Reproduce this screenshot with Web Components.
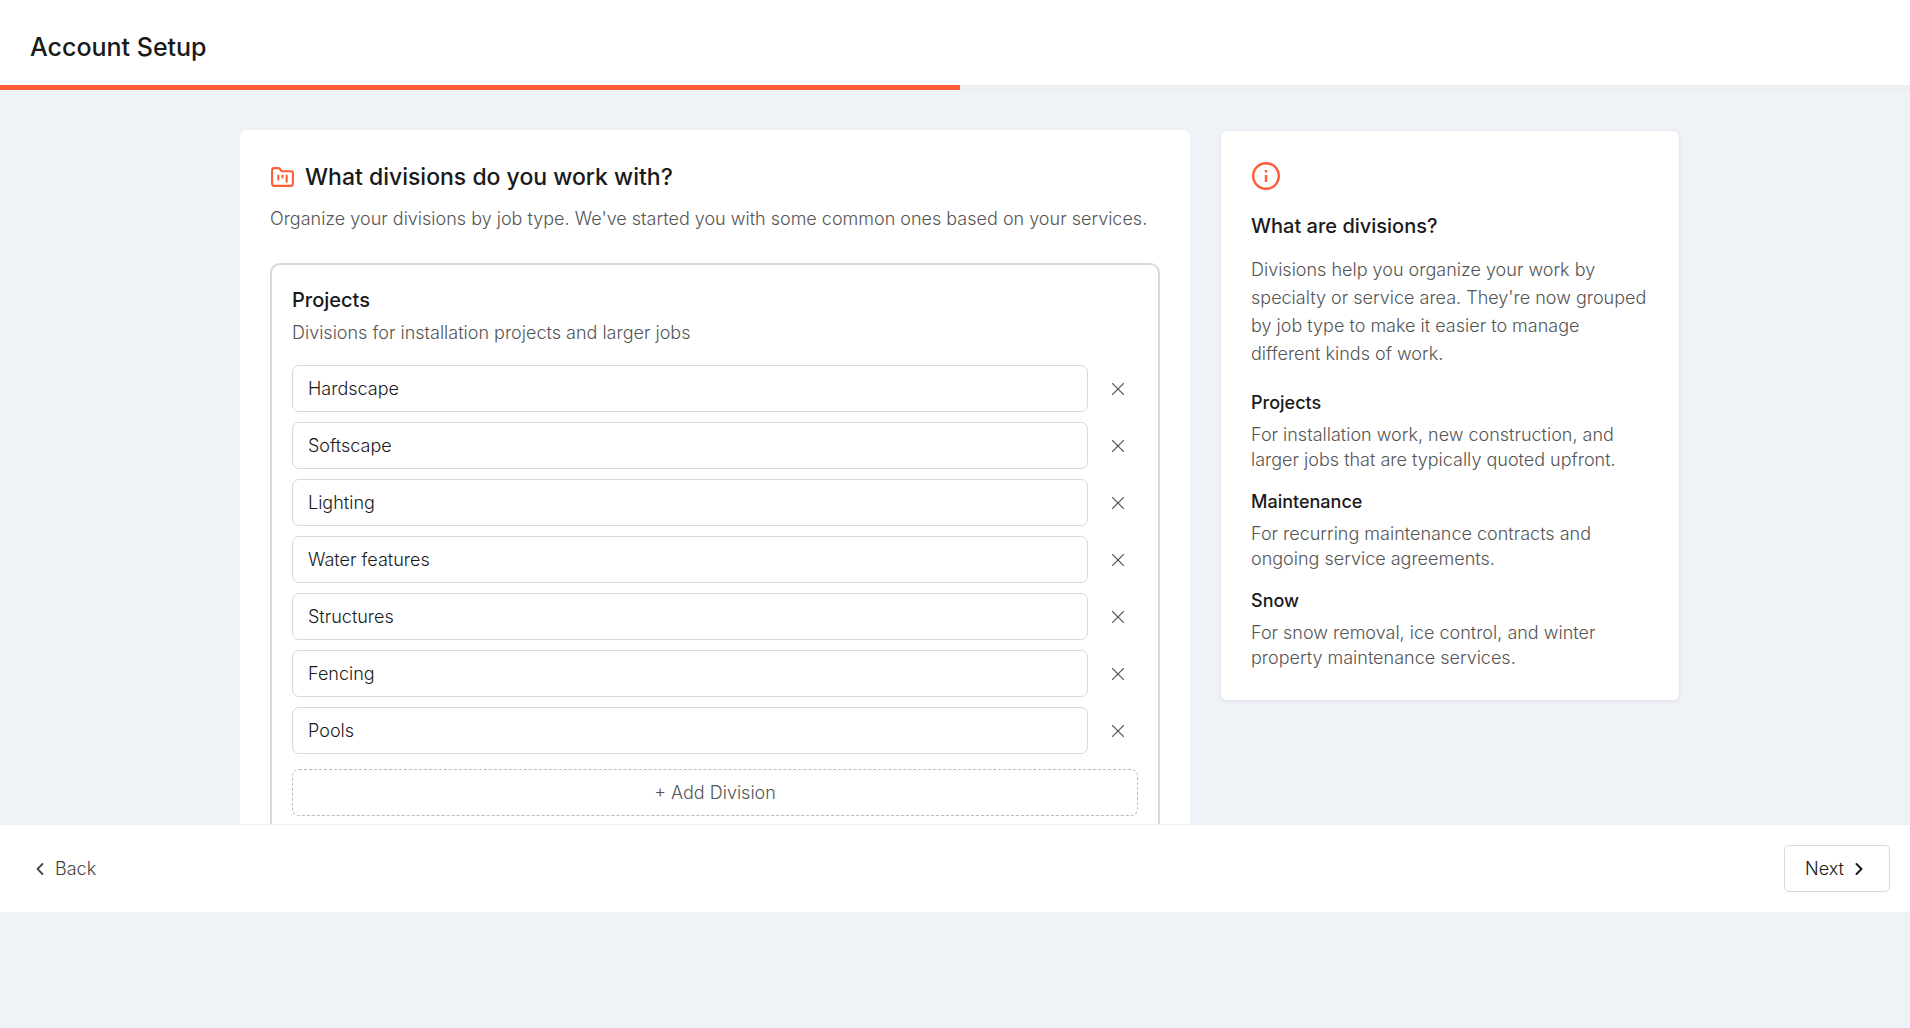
<!DOCTYPE html>
<html lang="en">
<head>
<meta charset="utf-8">
<title>Account Setup</title>
<style>
  :root {
    --accent: #ff5c35; --page: #eff3f8; --ink: #1a1a1a; --muted: #555;
    --line: #d9d9d9; --soft: #eee;
  }
  body { margin: 0; background: var(--page); color: var(--ink); font: 300 18px/25px Inter, "Liberation Sans", sans-serif; }
</style>
</head>
<body>
<account-setup></account-setup>
<script>
const define = (name, html, init) => {
  const template = document.createElement('template');
  template.innerHTML = '<style>*{box-sizing:border-box}h1,h2,h3,h4,p{margin:0}svg{display:block;flex:none}button{font:inherit;cursor:pointer}</style>' + html;
  customElements.define(name, class extends HTMLElement {
    connectedCallback() {
      if (this.shadowRoot) return;
      this.attachShadow({ mode: 'open' }).append(template.content.cloneNode(true));
      if (init) init(this, this.shadowRoot);
    }
  });
};

define('setup-header', `
<style>
  :host { display: block; background: #fff; }
  header { padding: 30px 30px 20px; }
  h1 { font-size: 25px; line-height: 35px; font-weight: 500; }
  .track { height: 5px; background: var(--soft); }
  .fill { height: 100%; background: var(--accent); }
</style>
<header><h1><slot></slot></h1></header>
<div class="track" role="progressbar" aria-label="Setup progress"><div class="fill"></div></div>`,
(host, root) => root.querySelector('.fill').style.width = host.getAttribute('progress'));

define('division-field', `
<style>
  :host { display: flex; gap: 10px; align-items: center; }
  input { flex: 1; min-width: 0; height: 47px; padding: 0 15px; border: 1px solid var(--line); border-radius: 7px;
    background: #fff; color: var(--ink); font: inherit; outline: none; }
  button { width: 40px; height: 40px; padding: 0; border: 0; background: none; color: var(--muted); display: grid; place-items: center; }
</style>
<input type="text">
<button type="button"><svg width="12" height="12" viewBox="0 0 12 12" fill="none" stroke="currentColor" stroke-width="1.3" stroke-linecap="round"><path d="M.6.6l10.8 10.8M11.4.6.6 11.4"/></svg></button>`,
(host, root) => {
  const value = host.getAttribute('value') || '';
  const input = root.querySelector('input');
  input.value = value;
  input.setAttribute('aria-label', 'Division name');
  const button = root.querySelector('button');
  button.setAttribute('aria-label', 'Remove ' + value);
  button.addEventListener('click', () => host.remove());
});

define('division-group', `
<style>
  :host { display: block; border: 2px solid var(--line); border-radius: 10px; padding: 20px; }
  h3 { font-size: 20px; line-height: 30px; font-weight: 500; margin-bottom: 5px; }
  p { color: var(--muted); margin-bottom: 20px; }
  .fields { display: flex; flex-direction: column; gap: 10px; margin-bottom: 15px; }
  button { display: block; width: 100%; height: 47px; border: 1px dashed #bbb; border-radius: 7px; background: #fff; color: var(--muted); }
</style>
<h3><slot name="title"></slot></h3>
<p><slot name="hint"></slot></p>
<div class="fields"><slot></slot></div>
<button type="button">+ Add Division</button>`,
(host, root) => root.querySelector('button').addEventListener('click', () => {
  host.append(document.createElement('division-field'));
}));

define('divisions-card', `
<style>
  :host { display: block; background: #fff; border-radius: 7px; padding: 30px; }
  .head { display: flex; align-items: center; gap: 10px; margin-bottom: 10px; }
  h2 { font-size: 23px; line-height: 35px; font-weight: 500; }
  svg { color: var(--accent); }
  p { color: var(--muted); line-height: 28px; margin-bottom: 30px; }
</style>
<div class="head">
  <svg width="25" height="25" viewBox="0 0 24 24" fill="none" stroke="currentColor" stroke-width="2" stroke-linecap="round" stroke-linejoin="round"><path d="M4 20h16a2 2 0 0 0 2-2V8a2 2 0 0 0-2-2h-7.93a2 2 0 0 1-1.66-.9l-.82-1.2A2 2 0 0 0 7.93 3H4a2 2 0 0 0-2 2v13c0 1.1.9 2 2 2Z"/><path d="M8 10v4M12 10v2M16 10v6"/></svg>
  <h2><slot name="title"></slot></h2>
</div>
<p><slot name="intro"></slot></p>
<slot></slot>`);

define('info-topic', `
<style>
  :host { display: block; }
  h4 { font-size: 18px; line-height: 25px; font-weight: 500; margin-bottom: 7px; }
  p { color: var(--muted); }
</style>
<h4><slot name="title"></slot></h4>
<p><slot></slot></p>`);

define('info-card', `
<style>
  :host { display: block; background: #fff; border: 1px solid #e6e9ee; border-radius: 7px; padding: 30px; box-shadow: 0 1px 3px rgba(0,0,0,.06); }
  svg { color: var(--accent); margin-bottom: 20px; }
  h3 { font-size: 20px; line-height: 30px; font-weight: 500; margin-bottom: 15px; }
  p { color: var(--muted); line-height: 28px; margin-bottom: 22px; }
  .topics { display: flex; flex-direction: column; gap: 17px; }
</style>
<svg width="30" height="30" viewBox="0 0 30 30" fill="none" stroke="currentColor" stroke-width="2.4"><circle cx="15" cy="15" r="12.8"/><path d="M15 14v7M15 9v2.4"/></svg>
<h3><slot name="title"></slot></h3>
<p><slot name="intro"></slot></p>
<div class="topics"><slot></slot></div>`);

define('setup-footer', `
<style>
  :host { display: block; background: #fff; border-top: 1px solid var(--soft); }
  nav { display: flex; justify-content: space-between; padding: 20px; }
  button { height: 47px; display: flex; align-items: center; border-radius: 5px; background: #fff; }
  .back { border: 0; padding: 0 15px; gap: 10px; color: #444; }
  .next { border: 1px solid var(--line); padding: 0 25px 0 20px; gap: 10px; color: var(--ink); }
</style>
<nav>
  <button class="back" type="button"><svg width="10" height="14" viewBox="0 0 10 14" fill="none" stroke="currentColor" stroke-width="1.8" stroke-linecap="round" stroke-linejoin="round"><path d="M7.5 2l-5 5 5 5"/></svg>Back</button>
  <button class="next" type="button">Next<svg width="10" height="14" viewBox="0 0 10 14" fill="none" stroke="currentColor" stroke-width="2" stroke-linecap="round" stroke-linejoin="round"><path d="M2.5 2l5 5-5 5"/></svg></button>
</nav>`);

define('account-setup', `
<style>
  :host { display: flex; flex-direction: column; height: calc(100vh - 116px); min-height: 400px; }
  main { flex: 1; min-height: 0; overflow-y: auto; scrollbar-width: none; padding: 40px 20px 40px 30px; }
  .columns { display: grid; grid-template-columns: minmax(0, 950fr) minmax(0, 460fr); gap: 30px; align-items: start; max-width: 1440px; margin: 0 auto; }
  @media (max-width: 900px) { .columns { grid-template-columns: minmax(0, 1fr); } }
</style>
<setup-header progress="50.26%">Account Setup</setup-header>
<main><div class="columns">
  <divisions-card>
    <span slot="title">What divisions do you work with?</span>
    <span slot="intro">Organize your divisions by job type. We've started you with some common ones based on your services.</span>
    <division-group>
      <span slot="title">Projects</span>
      <span slot="hint">Divisions for installation projects and larger jobs</span>
      <division-field value="Hardscape"></division-field>
      <division-field value="Softscape"></division-field>
      <division-field value="Lighting"></division-field>
      <division-field value="Water features"></division-field>
      <division-field value="Structures"></division-field>
      <division-field value="Fencing"></division-field>
      <division-field value="Pools"></division-field>
    </division-group>
  </divisions-card>
  <info-card>
    <span slot="title">What are divisions?</span>
    <span slot="intro">Divisions help you organize your work by specialty or service area. They're now grouped by job type to make it easier to manage different kinds of work.</span>
    <info-topic><span slot="title">Projects</span>For installation work, new construction, and larger jobs that are typically quoted upfront.</info-topic>
    <info-topic><span slot="title">Maintenance</span>For recurring maintenance contracts and ongoing service agreements.</info-topic>
    <info-topic><span slot="title">Snow</span>For snow removal, ice control, and winter property maintenance services.</info-topic>
  </info-card>
</div></main>
<setup-footer></setup-footer>`);
</script>
</body>
</html>
